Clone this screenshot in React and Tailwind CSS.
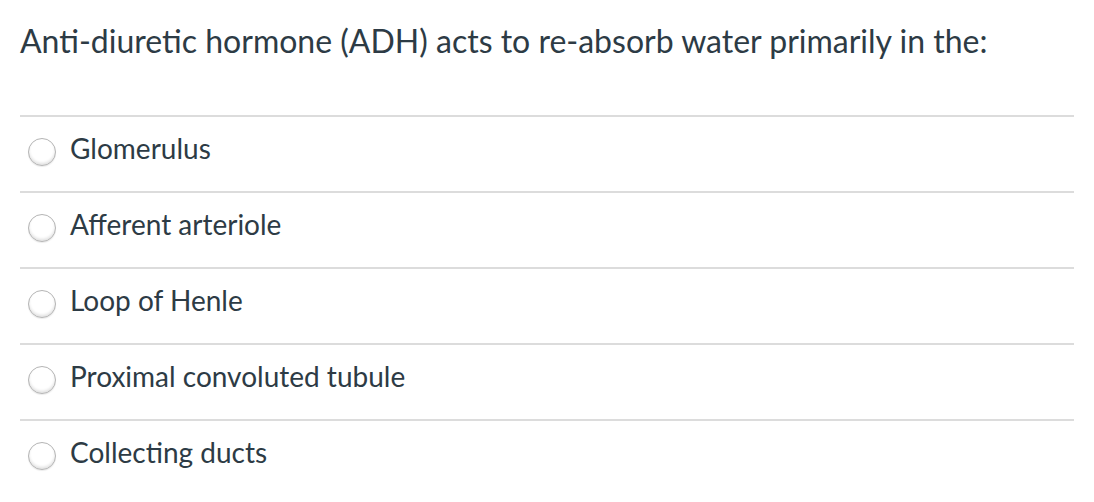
const options = [
  'Glomerulus',
  'Afferent arteriole',
  'Loop of Henle',
  'Proximal convoluted tubule',
  'Collecting ducts',
];

const Radio = () => (
  <span className="block w-[28px] h-[28px] rounded-full border border-[#b5b5b5] bg-white shadow-[inset_0_-2px_3px_rgba(0,0,0,0.12),0_1px_1px_rgba(0,0,0,0.08)] shrink-0" />
);

export default function App() {
  return (
    <div className="bg-white w-[1094px] h-[502px] px-[20px] pt-[19px] text-[#2d3b45] font-['Lato',sans-serif]">
      <h1 className="text-[32px] leading-[44px] font-normal">
        Anti-diuretic hormone (ADH) acts to re-absorb water primarily in the:
      </h1>

      <div className="mt-[52px] w-[1054px]">
        {options.map((opt) => (
          <div key={opt} className="border-t-2 border-[#dcdcdc] h-[76px] flex items-center gap-[14px] pl-[8px] pb-[4px]">
            <Radio />
            <span className="text-[28px] leading-[30px] -mt-[8px]">{opt}</span>
          </div>
        ))}
      </div>
    </div>
  );
}
